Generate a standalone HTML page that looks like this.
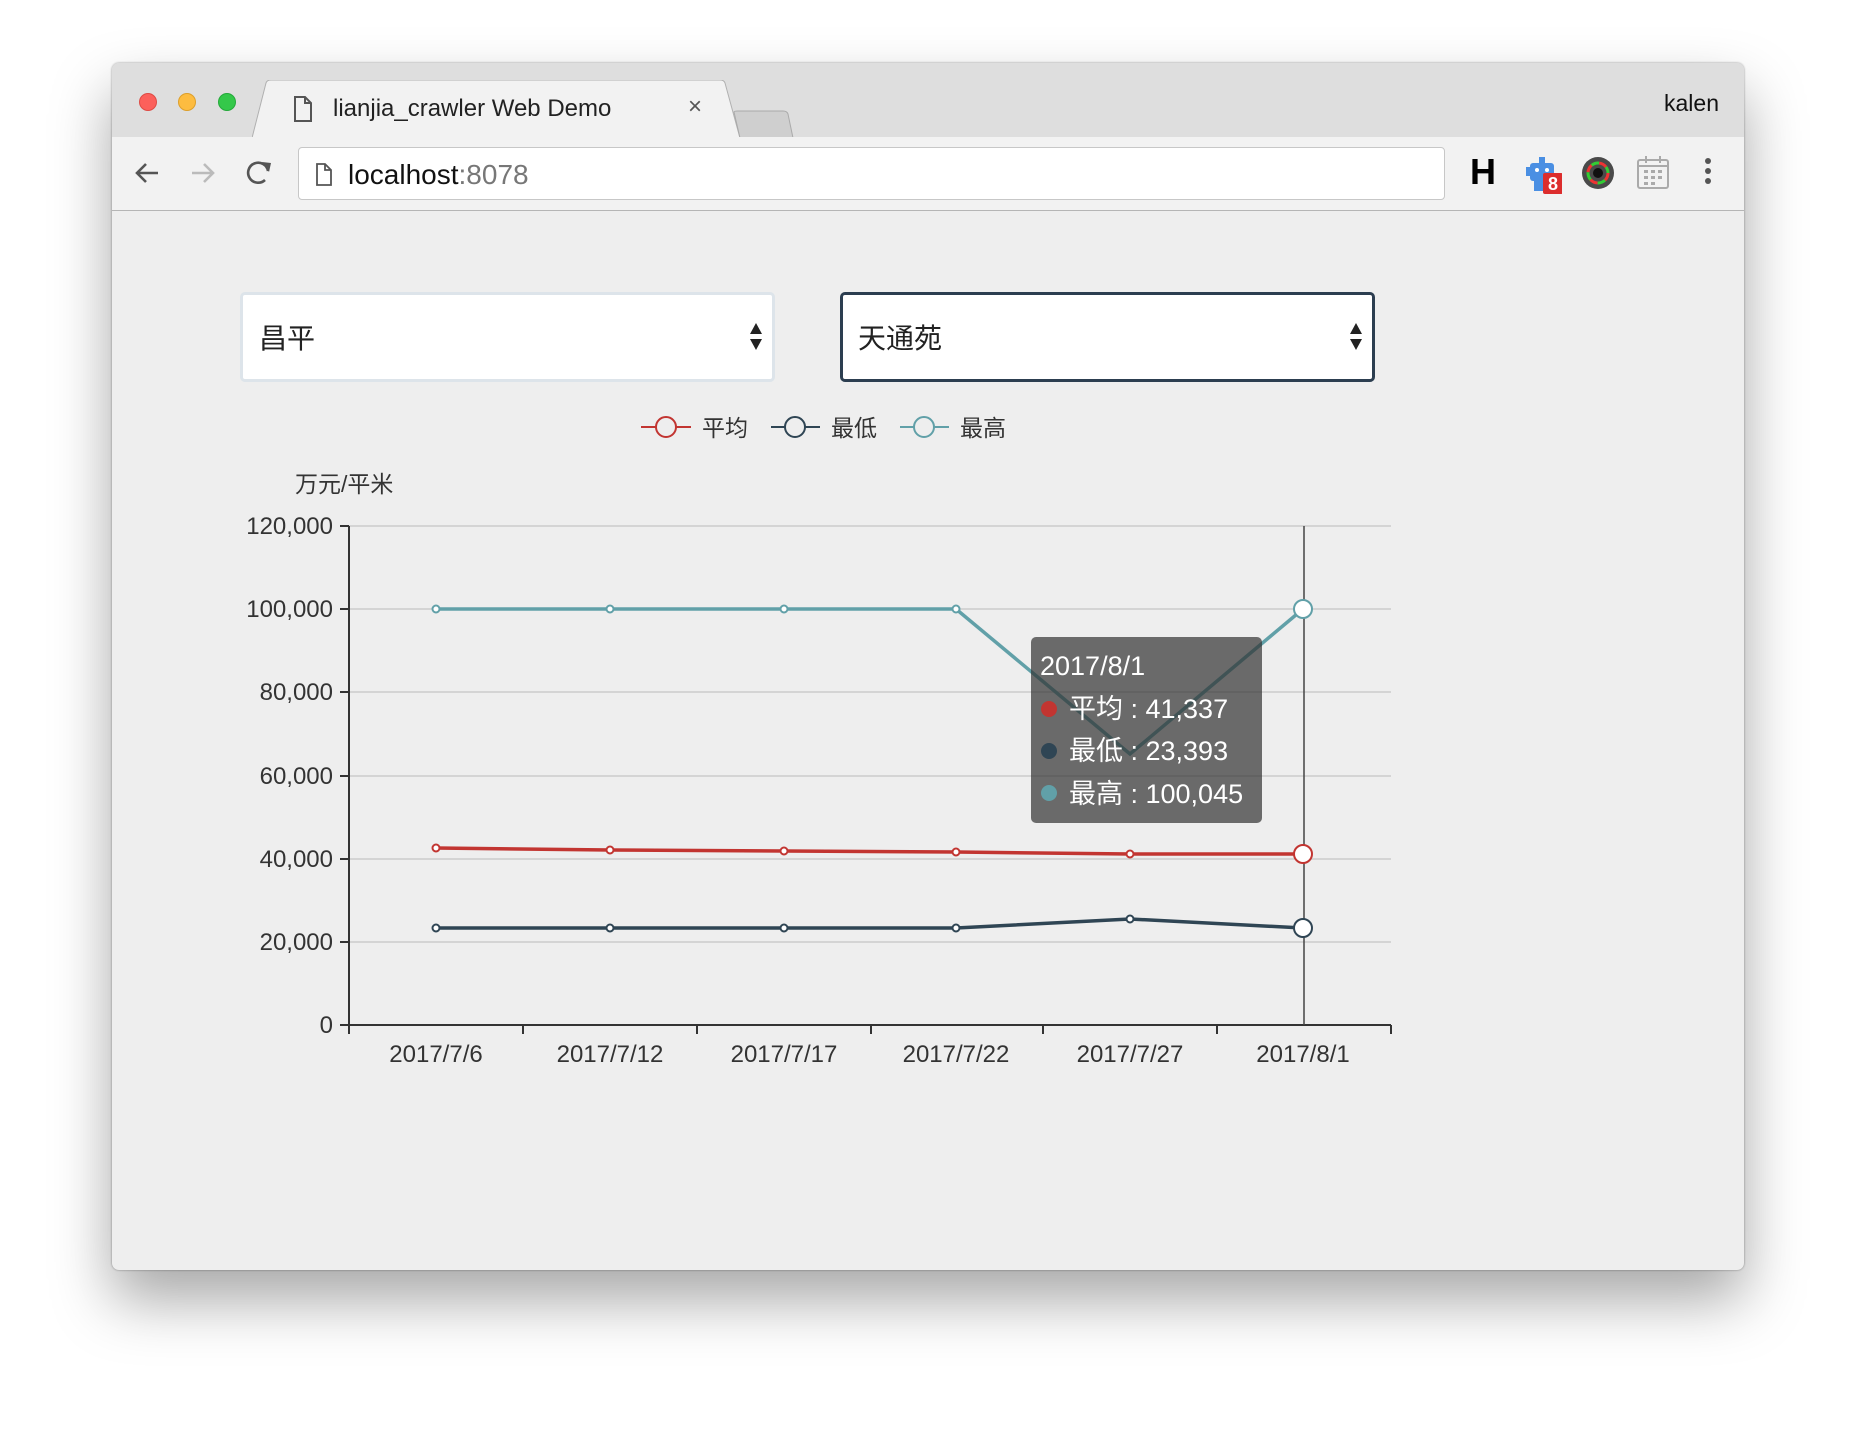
<!DOCTYPE html>
<html><head><meta charset="utf-8"><style>
*{margin:0;padding:0;box-sizing:border-box}
body{width:1856px;height:1430px;background:#fff;position:relative;overflow:hidden;font-family:"Liberation Sans","Noto Sans CJK SC",sans-serif}
.win{position:absolute;left:112px;top:63px;width:1632px;height:1207px;border-radius:7px;background:#eee;box-shadow:0 30px 60px rgba(0,0,0,.35),0 0 2px rgba(0,0,0,.4);overflow:hidden}
.tabbar{position:absolute;left:0;top:0;width:100%;height:74px;background:#dedede}
.toolbar{position:absolute;left:0;top:74px;width:100%;height:74px;background:#f2f2f2;border-bottom:1px solid #b5b5b5}
.dot{position:absolute;top:30px;width:18px;height:18px;border-radius:50%}
.t{position:absolute;white-space:nowrap}
.sel{position:absolute;top:229px;height:90px;background:#fff;border-radius:5px}
</style></head><body>
<div class="win">
 <div class="tabbar">
  <div class="dot" style="left:27px;background:#fc605b;border:1px solid #de4a44"></div>
  <div class="dot" style="left:66px;background:#fdbc40;border:1px solid #dd9f2a"></div>
  <div class="dot" style="left:106px;background:#34c84a;border:1px solid #24a93a"></div>
  <svg style="position:absolute;left:140px;top:17px" width="600" height="58"><path d="M0 58 L14 3 Q15 0 19 0 L468 0 Q472 0 473 3 L488 58 Z" fill="#f2f2f2" stroke="#b0b0b0" stroke-width="1"/><path d="M482 32 L488 58 L541 58 L536 34 Q535 31 531 31 L486 31 Q482 31 482 32Z" fill="#cfcfcf" stroke="#aaa"/></svg>
  <svg style="position:absolute;left:181px;top:33px" width="20" height="26"><path d="M2 1 H12 L18 7 V25 H2Z M12 1 V7 H18" fill="none" stroke="#555" stroke-width="2"/></svg>
  <div class="t" style="left:221px;top:32px;font-size:24px;color:#222">lianjia_crawler Web Demo</div>
  <div class="t" style="left:576px;top:30px;font-size:24px;color:#555">×</div>
  <div class="t" style="left:1552px;top:27px;font-size:23px;color:#111">kalen</div>
 </div>
 <div class="toolbar">
  <svg style="position:absolute;left:20px;top:22px" width="140" height="30"><path d="M26 14 H6 M14 5 L5 14 L14 23" fill="none" stroke="#555" stroke-width="2.6"/><path d="M60 14 H80 M72 5 L81 14 L72 23" fill="none" stroke="#bbb" stroke-width="2.6"/><path d="M136 12 A10 10 0 1 0 133 21" fill="none" stroke="#555" stroke-width="2.6"/><path d="M130 3 L139 4 L137 13Z" fill="#555"/></svg>
  <div style="position:absolute;left:186px;top:10px;width:1147px;height:53px;background:#fff;border:1px solid #c7c7c7;border-radius:4px"></div>
  <svg style="position:absolute;left:203px;top:26px" width="18" height="23"><path d="M2 1 H10 L16 7 V22 H2Z M10 1 V7 H16" fill="none" stroke="#555" stroke-width="1.8"/></svg>
  <div class="t" style="left:236px;top:22px;font-size:28px;color:#111">localhost<span style="color:#777">:8078</span></div>
  <div class="t" style="left:1358px;top:14px;font-size:36px;font-weight:bold;color:#000">H</div>
  <svg style="position:absolute;left:1412px;top:18px" width="38" height="40"><rect x="6" y="8" width="24" height="18" rx="3" fill="#4a8fe3"/><rect x="15" y="2" width="6" height="7" fill="#4a8fe3"/><rect x="2" y="12" width="5" height="9" fill="#4a8fe3"/><rect x="10" y="24" width="12" height="12" fill="#4a8fe3"/><circle cx="13" cy="15" r="2" fill="#fff"/><circle cx="23" cy="15" r="2" fill="#fff"/><rect x="19" y="18" width="20" height="21" rx="2" fill="#dc2d2d"/><text x="29" y="35" font-size="18" font-weight="bold" fill="#fff" text-anchor="middle" font-family="Liberation Sans">8</text></svg>
  <svg style="position:absolute;left:1468px;top:18px" width="36" height="36"><circle cx="18" cy="18" r="16" fill="#4a4a4a"/><circle cx="18" cy="18" r="10" fill="none" stroke="#e33" stroke-width="3" stroke-dasharray="8 8"/><circle cx="18" cy="18" r="10" fill="none" stroke="#3c3" stroke-width="3" stroke-dasharray="8 8" stroke-dashoffset="8"/><circle cx="18" cy="18" r="5" fill="#111"/></svg>
  <svg style="position:absolute;left:1523px;top:18px" width="36" height="36"><rect x="3" y="5" width="30" height="28" rx="2" fill="none" stroke="#aaa" stroke-width="2"/><path d="M3 11 H33 M11 1 V8 M25 1 V8" stroke="#aaa" stroke-width="2"/><g fill="#aaa"><rect x="9" y="15" width="4" height="3"/><rect x="16" y="15" width="4" height="3"/><rect x="23" y="15" width="4" height="3"/><rect x="9" y="21" width="4" height="3"/><rect x="16" y="21" width="4" height="3"/><rect x="23" y="21" width="4" height="3"/><rect x="9" y="27" width="4" height="3"/><rect x="16" y="27" width="4" height="3"/></g></svg>
  <svg style="position:absolute;left:1588px;top:20px" width="16" height="32"><circle cx="8" cy="4" r="3" fill="#555"/><circle cx="8" cy="14" r="3" fill="#555"/><circle cx="8" cy="24" r="3" fill="#555"/></svg>
 </div>
 <div class="sel" style="left:128px;width:535px;border:3px solid #dde4ea"></div>
 <div class="t" style="left:147px;top:254px;font-size:28px;color:#222">昌平</div>
 <svg style="position:absolute;left:637px;top:260px" width="14" height="28"><path d="M1 11 L7 0 L13 11Z M1 16 L7 27 L13 16Z" fill="#222"/></svg>
 <div class="sel" style="left:728px;width:535px;border:3px solid #2c3e50"></div>
 <div class="t" style="left:746px;top:254px;font-size:28px;color:#222">天通苑</div>
 <svg style="position:absolute;left:1237px;top:260px" width="14" height="28"><path d="M1 11 L7 0 L13 11Z M1 16 L7 27 L13 16Z" fill="#222"/></svg>
</div>
<svg style="position:absolute;left:0;top:0" width="1856" height="1430" font-family="Liberation Sans,Noto Sans CJK SC,sans-serif">
 <g stroke-width="2" fill="#eee">
  <line x1="641" y1="427" x2="691" y2="427" stroke="#c23531"/><circle cx="666" cy="427" r="10" stroke="#c23531"/>
  <line x1="771" y1="427" x2="820" y2="427" stroke="#2f4554"/><circle cx="795" cy="427" r="10" stroke="#2f4554"/>
  <line x1="900" y1="427" x2="949" y2="427" stroke="#61a0a8"/><circle cx="924" cy="427" r="10" stroke="#61a0a8"/>
 </g>
 <g font-size="23" fill="#333"><text x="702" y="436">平均</text><text x="831" y="436">最低</text><text x="960" y="436">最高</text><text x="295" y="492">万元/平米</text></g>
 <g stroke="#ccc" stroke-width="1.5"><line x1="349" y1="526" x2="1391" y2="526"/><line x1="349" y1="609" x2="1391" y2="609"/><line x1="349" y1="692" x2="1391" y2="692"/><line x1="349" y1="776" x2="1391" y2="776"/><line x1="349" y1="859" x2="1391" y2="859"/><line x1="349" y1="942" x2="1391" y2="942"/></g>
 <g stroke="#333" stroke-width="2"><line x1="349" y1="526" x2="349" y2="1026"/><line x1="349" y1="1025" x2="1391" y2="1025"/>
  <path d="M340 526H349M340 609H349M340 692H349M340 776H349M340 859H349M340 942H349M340 1025H349M349 1025V1034M523 1025V1034M697 1025V1034M871 1025V1034M1043 1025V1034M1217 1025V1034M1391 1025V1034"/></g>
 <g font-size="24" fill="#333" text-anchor="end"><text x="333" y="534">120,000</text><text x="333" y="617">100,000</text><text x="333" y="700">80,000</text><text x="333" y="784">60,000</text><text x="333" y="867">40,000</text><text x="333" y="950">20,000</text><text x="333" y="1033">0</text></g>
 <g font-size="24" fill="#333" text-anchor="middle"><text x="436" y="1062">2017/7/6</text><text x="610" y="1062">2017/7/12</text><text x="784" y="1062">2017/7/17</text><text x="956" y="1062">2017/7/22</text><text x="1130" y="1062">2017/7/27</text><text x="1303" y="1062">2017/8/1</text></g>
 <line x1="1304" y1="526" x2="1304" y2="1025" stroke="#444" stroke-width="1.5"/>
 <g fill="none" stroke-width="3.5">
  <polyline stroke="#61a0a8" points="436,609 610,609 784,609 956,609 1130,754 1303,609"/>
  <polyline stroke="#c23531" points="436,848 610,850 784,851 956,852 1130,854 1303,854"/>
  <polyline stroke="#2f4554" points="436,928 610,928 784,928 956,928 1130,919 1303,928"/>
 </g>
 <g fill="#fff" stroke-width="2">
  <g stroke="#61a0a8"><circle cx="436" cy="609" r="3.5"/><circle cx="610" cy="609" r="3.5"/><circle cx="784" cy="609" r="3.5"/><circle cx="956" cy="609" r="3.5"/><circle cx="1303" cy="609" r="9"/></g>
  <g stroke="#c23531"><circle cx="436" cy="848" r="3.5"/><circle cx="610" cy="850" r="3.5"/><circle cx="784" cy="851" r="3.5"/><circle cx="956" cy="852" r="3.5"/><circle cx="1130" cy="854" r="3.5"/><circle cx="1303" cy="854" r="9"/></g>
  <g stroke="#2f4554"><circle cx="436" cy="928" r="3.5"/><circle cx="610" cy="928" r="3.5"/><circle cx="784" cy="928" r="3.5"/><circle cx="956" cy="928" r="3.5"/><circle cx="1130" cy="919" r="3.5"/><circle cx="1303" cy="928" r="9"/></g>
 </g>
 <rect x="1031" y="637" width="231" height="186" rx="5" fill="rgba(50,50,50,0.7)"/>
 <g font-size="27" fill="#fff"><text x="1040" y="675">2017/8/1</text><text x="1069" y="718">平均 : 41,337</text><text x="1069" y="760">最低 : 23,393</text><text x="1069" y="803">最高 : 100,045</text></g>
 <circle cx="1049" cy="709" r="8" fill="#c23531"/><circle cx="1049" cy="751" r="8" fill="#2f4554"/><circle cx="1049" cy="793" r="8" fill="#61a0a8"/>
</svg>
</body></html>
